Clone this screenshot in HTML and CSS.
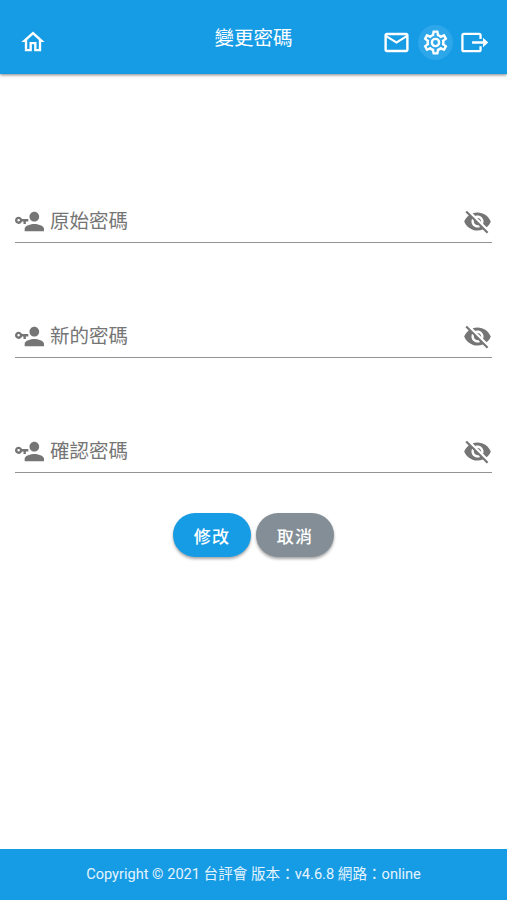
FILE: index.html
```html
<!DOCTYPE html>
<html lang="zh-Hant">

<head>
    <meta charset="UTF-8">
    <meta name="viewport" content="width=device-width, initial-scale=1.0">
    <title>變更密碼</title>
    <link rel="stylesheet" href="styles.css">
</head>

<body>
    <!-- Shared icon shapes -->
    <svg class="sprite" aria-hidden="true">
        <symbol id="account-key" viewBox="0 0 24 24">
            <path d="M11 10v2H9v2H7v-2H5.8c-.4 1.2-1.5 2-2.8 2-1.7 0-3-1.3-3-3s1.3-3 3-3c1.3 0 2.4.8 2.8 2H11M3 10c-.6 0-1 .4-1 1s.4 1 1 1 1-.4 1-1-.4-1-1-1m13 4c2.7 0 8 1.3 8 4v2H8v-2c0-2.7 5.3-4 8-4m0-2c-2.2 0-4-1.8-4-4s1.8-4 4-4 4 1.8 4 4-1.8 4-4 4z" />
        </symbol>
        <symbol id="eye-off" viewBox="0 0 24 24">
            <path d="M12 7c2.76 0 5 2.24 5 5 0 .65-.13 1.26-.36 1.83l2.92 2.92c1.51-1.26 2.7-2.89 3.43-4.75-1.73-4.39-6-7.5-11-7.5-1.4 0-2.74.25-3.98.7l2.16 2.16C10.74 7.13 11.35 7 12 7zM2 4.27l2.28 2.28.46.46C3.08 8.3 1.78 10.02 1 12c1.73 4.39 6 7.5 11 7.5 1.55 0 3.03-.3 4.38-.84l.42.42L19.73 22 21 20.73 3.27 3 2 4.27zM7.53 9.8l1.55 1.55c-.05.21-.08.43-.08.65 0 1.66 1.34 3 3 3 .22 0 .44-.03.65-.08l1.55 1.55c-.67.33-1.41.53-2.2.53-2.76 0-5-2.24-5-5 0-.79.2-1.53.53-2.2zm4.31-.78l3.15 3.15.02-.16c0-1.66-1.34-3-3-3l-.17.01z" />
        </symbol>
    </svg>

    <header class="app-bar">
        <a class="icon-btn" href="#" aria-label="首頁">
            <svg class="icon home" viewBox="0 0 24 24">
                <path d="M12 5.69l5 4.5V18h-2v-6H9v6H7v-7.81l5-4.5M12 3L2 12h3v8h6v-6h2v6h6v-8h3L12 3z" />
            </svg>
        </a>
        <h1 class="title">變更密碼</h1>
        <nav class="actions">
            <a class="icon-btn" href="#" aria-label="訊息">
                <svg class="icon" viewBox="0 0 24 24">
                    <path d="M22 6c0-1.1-.9-2-2-2H4c-1.1 0-2 .9-2 2v12c0 1.1.9 2 2 2h16c1.1 0 2-.9 2-2V6zm-2 0l-8 5-8-5h16zm0 12H4V8l8 5 8-5v10z" />
                </svg>
            </a>
            <a class="icon-btn active" href="#" aria-label="設定">
                <svg class="icon" viewBox="0 0 24 24">
                    <path d="M12 8a4 4 0 0 1 4 4 4 4 0 0 1-4 4 4 4 0 0 1-4-4 4 4 0 0 1 4-4m0 2a2 2 0 0 0-2 2 2 2 0 0 0 2 2 2 2 0 0 0 2-2 2 2 0 0 0-2-2m-2 12c-.25 0-.46-.18-.5-.42l-.37-2.65c-.63-.25-1.17-.59-1.69-.99l-2.49 1.01c-.22.08-.49 0-.61-.22l-2-3.46a.493.493 0 0 1 .12-.64l2.11-1.66L4.5 12l.07-1-2.11-1.63a.493.493 0 0 1-.12-.64l2-3.46c.12-.22.39-.31.61-.22l2.49 1c.52-.39 1.06-.73 1.69-.98l.37-2.65c.04-.24.25-.42.5-.42h4c.25 0 .46.18.5.42l.37 2.65c.63.25 1.17.59 1.69.98l2.49-1c.22-.09.49 0 .61.22l2 3.46c.13.22.07.49-.12.64L19.43 11l.07 1-.07 1 2.11 1.63c.19.15.25.42.12.64l-2 3.46c-.12.22-.39.31-.61.22l-2.49-1c-.52.39-1.06.73-1.69.98l-.37 2.65c-.04.24-.25.42-.5.42h-4m1.25-18l-.37 2.61c-1.2.25-2.26.89-3.03 1.78L5.44 7.35l-.75 1.3L6.8 10.2a5.55 5.55 0 0 0 0 3.6l-2.12 1.56.75 1.3 2.43-1.04c.77.88 1.82 1.52 3.01 1.76l.37 2.62h1.52l.37-2.61c1.19-.25 2.24-.89 3.01-1.77l2.43 1.04.75-1.3-2.12-1.55c.4-1.17.4-2.44 0-3.61l2.11-1.55-.75-1.3-2.41 1.04a5.42 5.42 0 0 0-3.03-1.77L12.75 4h-1.5z" />
                </svg>
            </a>
            <a class="icon-btn" href="#" aria-label="登出">
                <svg class="icon" viewBox="0 0 24 24">
                    <path d="M17 9V6a1.2 1.2 0 0 0-1.2-1.2H3.2A1.2 1.2 0 0 0 2 6v12a1.2 1.2 0 0 0 1.2 1.2h12.6A1.2 1.2 0 0 0 17 18v-3M10 12h11" fill="none" stroke="currentColor" stroke-width="1.9" />
                    <path d="M19 8l4.4 4-4.4 4z" />
                </svg>
            </a>
        </nav>
    </header>

    <main class="content">
        <form class="password-form">
            <label class="field">
                <svg class="icon"><use href="#account-key" /></svg>
                <input type="password" placeholder="原始密碼">
                <svg class="icon"><use href="#eye-off" /></svg>
            </label>
            <label class="field">
                <svg class="icon"><use href="#account-key" /></svg>
                <input type="password" placeholder="新的密碼">
                <svg class="icon"><use href="#eye-off" /></svg>
            </label>
            <label class="field">
                <svg class="icon"><use href="#account-key" /></svg>
                <input type="password" placeholder="確認密碼">
                <svg class="icon"><use href="#eye-off" /></svg>
            </label>
            <div class="buttons">
                <button type="button" class="btn primary">修改</button>
                <button type="button" class="btn secondary">取消</button>
            </div>
        </form>
    </main>

    <footer class="footer">Copyright © 2021 台評會 版本：v4.6.8 網路：online</footer>
</body>

</html>
```
FILE: styles.css
```css
* {
    margin: 0;
    padding: 0;
    box-sizing: border-box;
}

body {
    display: flex;
    flex-direction: column;
    height: 100vh;
    background-color: #fff;
    font-family: Roboto, "Noto Sans CJK TC", sans-serif;
    overflow: hidden;
}

.sprite {
    display: none;
}

.icon {
    display: block;
    flex: none;
    width: 29px;
    height: 29px;
    fill: currentColor;
}

/* Top bar */
.app-bar {
    display: grid;
    grid-template-columns: 1fr auto 1fr;
    align-items: center;
    height: 74px;
    padding: 10px 15px 0;
    background-color: #169be5;
    color: #fff;
    box-shadow: 0 1px 3px rgba(0, 0, 0, 0.5);
}

.title {
    padding-bottom: 6px;
    font-size: 19.5px;
    font-weight: 400;
    line-height: 28px;
}

.icon-btn {
    display: flex;
    align-items: center;
    justify-content: center;
    width: 35px;
    height: 35px;
    border-radius: 50%;
    color: #fff;
}

.icon-btn.active {
    background-color: #2da6ea;
}

.icon.home {
    width: 28px;
    height: 28px;
}

.actions {
    display: flex;
    justify-self: end;
    gap: 4px;
}

/* Password form */
.content {
    flex: 1;
    padding: 127px 15px 0;
}

.field {
    display: flex;
    align-items: center;
    height: 42px;
    margin-bottom: 73px;
    border-bottom: 1px solid #949494;
    color: #757575;
}

.field input {
    flex: 1;
    min-width: 0;
    height: 40px;
    padding-left: 6px;
    border: none;
    outline: none;
    background: none;
    font: 19.5px Roboto, "Noto Sans CJK TC", sans-serif;
}

.field input::placeholder {
    color: #757575;
    opacity: 1;
}

.buttons {
    display: flex;
    justify-content: center;
    gap: 5px;
    margin-top: -33px;
}

.btn {
    width: 78px;
    height: 44px;
    border: none;
    border-radius: 22px;
    color: #fff;
    font: 500 17px Roboto, "Noto Sans CJK TC", sans-serif;
    letter-spacing: 1.2px;
    box-shadow: 0 2px 3px rgba(0, 0, 0, 0.35);
}

.btn.primary {
    background-color: #169be5;
}

.btn.secondary {
    background-color: #838e96;
}

.footer {
    height: 51px;
    background-color: #169be5;
    color: #e4f4fd;
    font-size: 14.6px;
    line-height: 51px;
    text-align: center;
}
```
